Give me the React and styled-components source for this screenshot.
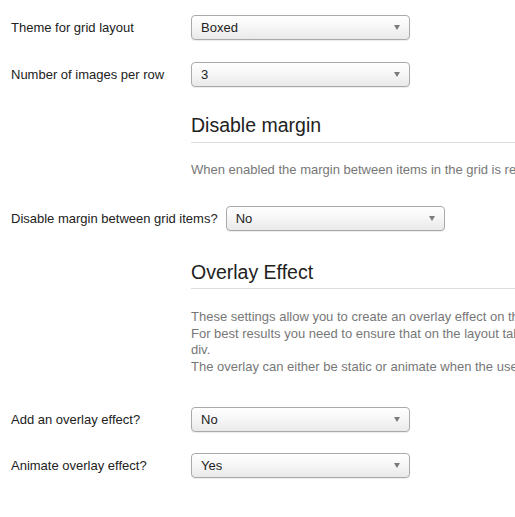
import styled, { createGlobalStyle } from "styled-components";

const Global = createGlobalStyle`
  html, body {
    margin: 0;
    padding: 0;
    background: #fff;
    overflow: hidden;
  }
  body {
    font-family: "Liberation Sans", Arial, Helvetica, sans-serif;
    font-size: 13px;
    color: #222;
  }
`;

const Page = styled.div`
  width: 515px;
  height: 517px;
  overflow: hidden;
  padding: 15px 0 0 11px;
  box-sizing: border-box;
`;

const Row = styled.div`
  display: grid;
  grid-template-columns: 180px 219px;
  align-items: center;
  margin-top: ${(p) => p.$top || 0}px;
`;

const InlineRow = styled.div`
  display: flex;
  align-items: center;
  gap: 8px;
  margin-top: ${(p) => p.$top || 0}px;
`;

const Label = styled.label`
  font-size: 13px;
  color: #222;
  white-space: nowrap;
`;

const Section = styled.div`
  margin-left: 180px;
  margin-top: ${(p) => p.$top || 0}px;
`;

const Heading = styled.h3`
  margin: 0;
  font-size: 19.5px;
  line-height: 24px;
  font-weight: normal;
  color: #222;
  padding-bottom: ${(p) => p.$pad}px;
  border-bottom: 1px solid #dedede;
`;

const Desc = styled.p`
  margin: ${(p) => p.$top}px 0 0;
  color: #777;
  font-size: 13px;
  line-height: ${(p) => p.$lh || 17}px;
  white-space: nowrap;
`;

const SelectBox = styled.div`
  position: relative;
  width: 219px;
  height: 25px;
  box-sizing: border-box;
  display: flex;
  align-items: center;
  padding: 0 9px;
  border: 1px solid #aaa;
  border-radius: 4px;
  background: linear-gradient(#ffffff 0%, #f7f7f7 45%, #e9e9e9 100%);
  box-shadow: 0 1px 1px rgba(0, 0, 0, 0.08);
  font-size: 13px;
  color: #222;
  cursor: default;
`;

const Value = styled.span`
  flex: 1;
`;

const Arrow = styled.span`
  width: 0;
  height: 0;
  border-left: 3.5px solid transparent;
  border-right: 3.5px solid transparent;
  border-top: 5px solid #7a7a7a;
`;

function Select({ value }) {
  return (
    <SelectBox>
      <Value>{value}</Value>
      <Arrow />
    </SelectBox>
  );
}

export default function App() {
  return (
    <Page>
      <Global />
      <Row>
        <Label>Theme for grid layout</Label>
        <Select value="Boxed" />
      </Row>
      <Row $top={22}>
        <Label>Number of images per row</Label>
        <Select value="3" />
      </Row>

      <Section $top={26}>
        <Heading $pad={5}>Disable margin</Heading>
        <Desc $top={18}>
          When enabled the margin between items in the grid is removed
        </Desc>
      </Section>

      <InlineRow $top={28}>
        <Label>Disable margin between grid items?</Label>
        <Select value="No" />
      </InlineRow>

      <Section $top={29}>
        <Heading $pad={4}>Overlay Effect</Heading>
        <Desc $top={20} $lh={16.5}>
          These settings allow you to create an overlay effect on the images in the grid.
          <br />
          For best results you need to ensure that on the layout tab the image is wrapped in a link
          <br />
          div.
          <br />
          The overlay can either be static or animate when the user hovers over the image.
        </Desc>
      </Section>

      <Row $top={32}>
        <Label>Add an overlay effect?</Label>
        <Select value="No" />
      </Row>
      <Row $top={21}>
        <Label>Animate overlay effect?</Label>
        <Select value="Yes" />
      </Row>
    </Page>
  );
}
